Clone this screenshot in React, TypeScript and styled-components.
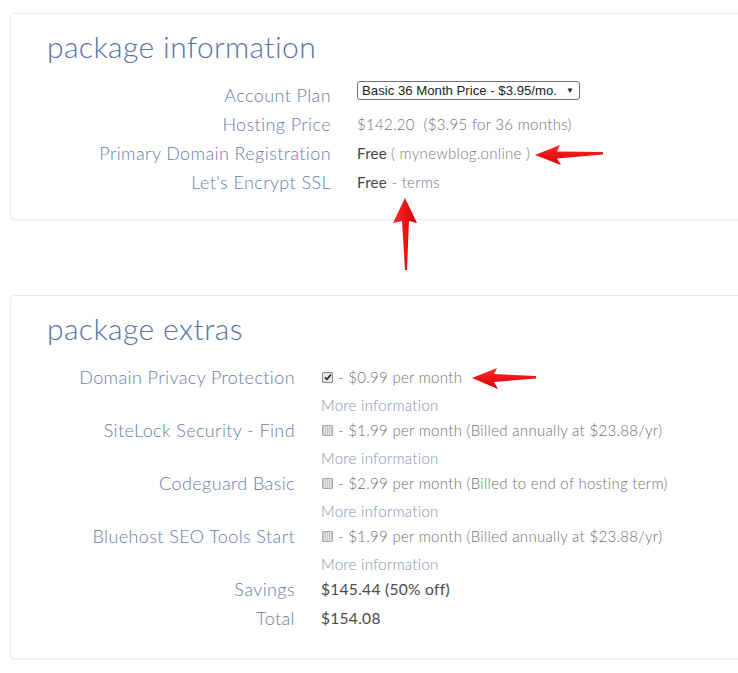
import React from "react";
import styled, { createGlobalStyle } from "styled-components";

const Global = createGlobalStyle`
  html, body { margin: 0; padding: 0; background: #fff; overflow: hidden; }
  body { font-family: Lato, "Open Sans", sans-serif; }
`;

const Page = styled.div`
  position: relative;
  width: 738px;
  height: 673px;
  padding: 13px 0 0 10px;
  box-sizing: border-box;
  display: flex;
  flex-direction: column;
  gap: 75px;
`;

const Card = styled.section<{ $bottom: number }>`
  width: 770px;
  box-sizing: border-box;
  border: 1px solid #ebebeb;
  border-radius: 4px;
  box-shadow: 0 1px 1px rgba(0, 0, 0, 0.04);
  padding: 13px 0 ${(p) => p.$bottom}px 36px;
  background: #fff;
`;

const Title = styled.h2`
  margin: 0 0 16px 0;
  font-family: Lato, sans-serif;
  font-weight: 300;
  font-size: 30px;
  line-height: 38px;
  color: #5a71a5;
  letter-spacing: 0.4px;
`;

const Grid = styled.div<{ $label: number }>`
  display: grid;
  grid-template-columns: ${(p) => p.$label}px 1fr;
  column-gap: 26px;
  align-items: start;
`;

const Label = styled.div<{ $lh: number }>`
  text-align: right;
  font-weight: 300;
  font-size: 18px;
  letter-spacing: 0.4px;
  line-height: ${(p) => p.$lh}px;
  color: #6a7da8;
  white-space: nowrap;
`;

const Value = styled.div<{ $lh: number }>`
  font-weight: 300;
  font-size: 15px;
  letter-spacing: 0.3px;
  line-height: ${(p) => p.$lh}px;
  color: #707070;
  white-space: nowrap;
  display: flex;
  align-items: center;
`;

const Strong = styled.span`
  color: #444;
  font-weight: 400;
`;

const Muted = styled.span`
  color: #7a7a7a;
  margin-left: 4px;
`;

const LinkText = styled.span`
  color: #6d7a96;
`;

const Select = styled.div`
  display: inline-flex;
  align-items: center;
  justify-content: space-between;
  box-sizing: border-box;
  width: 223px;
  height: 19px;
  border: 1px solid #707070;
  border-radius: 3px;
  padding: 0 5px 0 4px;
  font-family: "Liberation Sans", Arial, sans-serif;
  font-size: 13.2px;
  letter-spacing: 0;
  color: #222;
  background: #fff;
`;

const Caret = styled.span`
  font-size: 8px;
  color: #222;
`;

const ExtraCell = styled.div`
  display: flex;
  flex-direction: column;
`;

const MoreInfo = styled.div`
  margin-top: 3px;
  font-weight: 300;
  font-size: 15px;
  letter-spacing: 0.3px;
  line-height: 22px;
  color: #8293b4;
`;

const Check = styled.span<{ $on?: boolean }>`
  display: inline-flex;
  align-items: center;
  justify-content: center;
  box-sizing: border-box;
  width: 11px;
  height: 11px;
  margin: 0 5px 0 1px;
  border: 1px solid ${(p) => (p.$on ? "#888" : "#aaa")};
  background: ${(p) =>
    p.$on
      ? "#e6e6e6"
      : "repeating-linear-gradient(90deg, #c9c9c9 0 1px, #e3e3e3 1px 2px)"};
  border-radius: 1px;
`;

const Total = styled.span`
  color: #4a4a4a;
  font-weight: 400;
  font-size: 15.5px;
  letter-spacing: 0.3px;
`;

const Overlay = styled.svg`
  position: absolute;
  left: 0;
  top: 0;
  pointer-events: none;
`;

const LabelRow = ({ label, children }: { label: string; children: React.ReactNode }) => (
  <>
    <Label $lh={29}>{label}</Label>
    <Value $lh={29}>{children}</Value>
  </>
);

const extras = [
  { label: "Domain Privacy Protection", on: true, text: "- $0.99 per month" },
  { label: "SiteLock Security - Find", on: false, text: "- $1.99 per month (Billed annually at $23.88/yr)" },
  { label: "Codeguard Basic", on: false, text: "- $2.99 per month (Billed to end of hosting term)" },
  { label: "Bluehost SEO Tools Start", on: false, text: "- $1.99 per month (Billed annually at $23.88/yr)" },
];

export default function App() {
  return (
    <Page>
      <Global />
      <Card $bottom={22}>
        <Title>package information</Title>
        <Grid $label={284}>
          <LabelRow label="Account Plan">
            <Select>
              <span>Basic 36 Month Price - $3.95/mo.</span>
              <Caret>▼</Caret>
            </Select>
          </LabelRow>
          <LabelRow label="Hosting Price">$142.20&nbsp; ($3.95 for 36 months)</LabelRow>
          <LabelRow label="Primary Domain Registration">
            <Strong>Free</Strong>
            <Muted>( mynewblog.online )</Muted>
          </LabelRow>
          <LabelRow label="Let's Encrypt SSL">
            <Strong>Free</Strong>&nbsp;-&nbsp;<LinkText>terms</LinkText>
          </LabelRow>
        </Grid>
      </Card>
      <Card $bottom={25}>
        <Title>package extras</Title>
        <Grid $label={248}>
          {extras.map((e) => (
            <React.Fragment key={e.label}>
              <Label $lh={28}>{e.label}</Label>
              <ExtraCell>
                <Value $lh={28}>
                  <Check $on={e.on}>
                    {e.on && (
                      <svg width="8" height="8" viewBox="0 0 8 8">
                        <path d="M1 4.2 L3 6.3 L7 1.5" stroke="#222" strokeWidth="1.6" fill="none" />
                      </svg>
                    )}
                  </Check>
                  {e.text}
                </Value>
                <MoreInfo>More information</MoreInfo>
              </ExtraCell>
            </React.Fragment>
          ))}
          <Label $lh={29}>Savings</Label>
          <Value $lh={29}>
            <Total>$145.44 (50% off)</Total>
          </Value>
          <Label $lh={29}>Total</Label>
          <Value $lh={29}>
            <Total>$154.08</Total>
          </Value>
        </Grid>
      </Card>
      <Overlay width="738" height="673" viewBox="0 0 738 673">
        <defs>
          <linearGradient id="redh" x1="0" y1="0" x2="0" y2="1">
            <stop offset="0" stopColor="#ff2a2a" />
            <stop offset="1" stopColor="#d80000" />
          </linearGradient>
          <linearGradient id="redv" x1="0" y1="0" x2="1" y2="0">
            <stop offset="0" stopColor="#ff2a2a" />
            <stop offset="1" stopColor="#d40000" />
          </linearGradient>
        </defs>
        <polygon
          points="535,155 560,145 557,151.5 603,152 603,154.5 557,158.5 561,165"
          fill="url(#redh)"
        />
        <polygon
          points="405,198 417,223 409,221 407,270 405,270 402,221 393,223"
          fill="url(#redv)"
        />
        <polygon
          points="472,378 497,368 494,374 536,376 536,378.5 494,382 498,389"
          fill="url(#redh)"
        />
      </Overlay>
    </Page>
  );
}
